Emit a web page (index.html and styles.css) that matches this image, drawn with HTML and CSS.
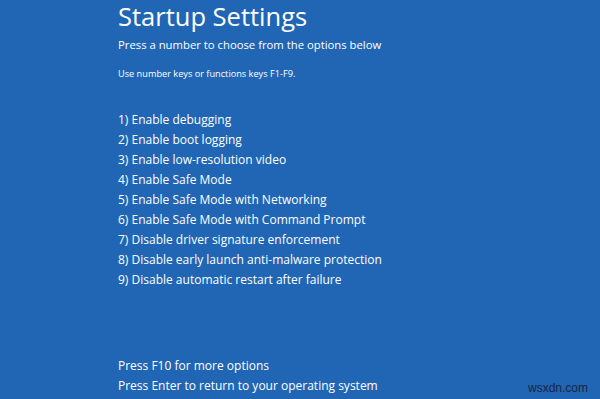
FILE: index.html
```html
<!DOCTYPE html>
<html>
<head>
<meta charset="utf-8">
<link rel="stylesheet" href="styles.css">
</head>
<body>
<div class="screen">
  <div class="content">
    <h1 class="title">Startup Settings</h1>
    <p class="lead">Press a number to choose from the options below</p>
    <p class="hint">Use number keys or functions keys F1-F9.</p>
    <ul class="options">
      <li>1) Enable debugging</li>
      <li>2) Enable boot logging</li>
      <li>3) Enable low-resolution video</li>
      <li>4) Enable Safe Mode</li>
      <li>5) Enable Safe Mode with Networking</li>
      <li>6) Enable Safe Mode with Command Prompt</li>
      <li>7) Disable driver signature enforcement</li>
      <li>8) Disable early launch anti-malware protection</li>
      <li>9) Disable automatic restart after failure</li>
    </ul>
    <div class="footer">
      <p>Press F10 for more options</p>
      <p>Press Enter to return to your operating system</p>
    </div>
  </div>
  <div class="watermark">wsxdn.com</div>
</div>
</body>
</html>
```
FILE: styles.css
```css
html, body {
  margin: 0;
  padding: 0;
}
body {
  width: 600px;
  height: 399px;
  overflow: hidden;
  background: #2166b5;
}
.screen {
  position: relative;
  width: 600px;
  height: 399px;
  background: #2166b5;
  color: #ffffff;
  font-family: "Open Sans", "Noto Sans", sans-serif;
}
.content {
  padding-left: 118px;
  padding-top: 0;
  display: flex;
  flex-direction: column;
}
.title {
  margin: 0;
  font-size: 25.5px;
  font-weight: 400;
  line-height: 32px;
}
.lead {
  margin: 5px 0 0 0;
  font-size: 11.3px;
  line-height: 16px;
}
.hint {
  margin: 14px 0 0 0;
  font-size: 9.2px;
  line-height: 14px;
}
.options {
  list-style: none;
  margin: 29px 0 0 0;
  padding: 0;
  font-size: 12px;
  line-height: 20px;
}
.footer {
  margin-top: 66px;
  font-size: 12px;
  line-height: 20px;
}
.footer p {
  margin: 0;
}
.watermark {
  position: absolute;
  right: 12px;
  bottom: 4px;
  font-family: "Liberation Sans", Arial, sans-serif;
  font-size: 12px;
  color: #1a2540;
}
```
